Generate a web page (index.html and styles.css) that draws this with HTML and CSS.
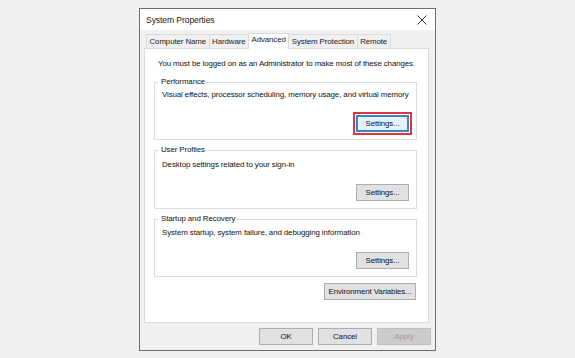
FILE: index.html
```html
<!DOCTYPE html>
<html>
<head>
  <meta charset="UTF-8">
  <title>System Properties</title>
  <link rel="stylesheet" href="styles.css">
</head>
<body>
  <div class="window">
    <div class="titlebar">
      <span class="title">System Properties</span>
      <svg class="close" width="10" height="10" viewBox="0 0 10 10">
        <path d="M0.5 0.5 L9.5 9.5 M9.5 0.5 L0.5 9.5" stroke="#333" stroke-width="1" fill="none"/>
      </svg>
    </div>

    <div class="tabs">
      <div class="tab">Computer Name</div>
      <div class="tab">Hardware</div>
      <div class="tab active">Advanced</div>
      <div class="tab">System Protection</div>
      <div class="tab">Remote</div>
    </div>

    <div class="panel">
      <p class="note">You must be logged on as an Administrator to make most of these changes.</p>

      <fieldset class="group group-perf">
        <legend>Performance</legend>
        <p class="desc">Visual effects, processor scheduling, memory usage, and virtual memory</p>
        <div class="actions">
          <span class="focus-ring"><button class="btn btn-default">Settings...</button></span>
        </div>
      </fieldset>

      <fieldset class="group group-user">
        <legend>User Profiles</legend>
        <p class="desc">Desktop settings related to your sign-in</p>
        <div class="actions">
          <button class="btn">Settings...</button>
        </div>
      </fieldset>

      <fieldset class="group">
        <legend>Startup and Recovery</legend>
        <p class="desc">System startup, system failure, and debugging information</p>
        <div class="actions">
          <button class="btn">Settings...</button>
        </div>
      </fieldset>

      <div class="env-row">
        <button class="btn btn-env">Environment Variables...</button>
      </div>
    </div>

    <div class="footer">
      <button class="btn btn-footer">OK</button>
      <button class="btn btn-footer">Cancel</button>
      <button class="btn btn-footer" disabled>Apply</button>
    </div>
  </div>
</body>
</html>
```

FILE: styles.css
```css
body {
  margin: 0;
  background-color: #f0f0f0;
  font-family: "Liberation Sans", Arial, sans-serif;
  font-size: 7.9px;
  letter-spacing: -0.1px;
  line-height: 10px;
  color: #111;
  display: flex;
  justify-content: center;
  padding-top: 8px;
}
.window {
  width: 295px;
  height: 341px;
  border: 1px solid #6e6e6e;
  background: #f0f0f0;
  display: flex;
  flex-direction: column;
}
.titlebar {
  height: 21px;
  background: #fff;
  display: flex;
  align-items: center;
  justify-content: space-between;
  padding: 0 8px 0 6px;
}
.title {
  font-size: 8.6px;
  color: #1a1a1a;
}
.tabs {
  display: flex;
  margin: 4px 0 0 6px;
  height: 14px;
  align-items: flex-end;
}
.tab {
  height: 13px;
  line-height: 13px;
  padding: 0 2.5px;
  border: 1px solid #dadada;
  border-bottom: none;
  margin-right: -1px;
  background: #f0f0f0;
  color: #1a1a1a;
  white-space: nowrap;
}
.tab.active {
  background: #fff;
  height: 15px;
  line-height: 12px;
  margin-bottom: -1px;
  position: relative;
  z-index: 1;
}
.panel {
  margin: 0 6px 0 4px;
  height: 273px;
  background: #fff;
  border: 1px solid #dadada;
  padding: 0 11px 0 9px;
}
.note {
  margin: 10px 0 8px 4px;
  white-space: nowrap;
}
.group {
  border: 1px solid #dcdcdc;
  margin: 0 0 5px 0;
  padding: 0 7px 7px 7px;
}
.group legend {
  padding: 0 1px 0 3px;
  margin-left: -4px;
}
.desc {
  margin: 4px 0 0 0;
  white-space: nowrap;
}
.actions {
  display: flex;
  justify-content: flex-end;
  margin-top: 14px;
}
.group-perf .desc {
  margin-top: 3px;
}
.group-perf .actions {
  margin-top: 15px;
}
.group-user .desc {
  margin-top: 5px;
}
.btn {
  font-family: inherit;
  font-size: 7.9px;
  letter-spacing: -0.1px;
  color: #111;
  background: #e1e1e1;
  border: 1px solid #adadad;
  height: 17px;
  padding: 0;
  width: 53px;
}
.focus-ring {
  display: flex;
  border: 2px solid #e2323c;
  padding: 1px;
  margin: -3px -3px -3px 0;
  background: #fff;
}
.btn-default {
  border: 1px solid #3c86c8;
  box-shadow: inset 0 0 0 1px #3c86c8;
  background: #e5f1fb;
}
.env-row {
  display: flex;
  justify-content: flex-end;
  margin-top: 6px;
  padding-right: 1px;
}
.btn-env {
  width: 92px;
}
.footer {
  display: flex;
  justify-content: flex-end;
  gap: 5px;
  margin: 5px 4px 0 0;
}
.btn-footer {
  width: 54px;
}
.btn-footer:disabled {
  background: #cccccc;
  border-color: #bfbfbf;
  color: #9a9a9a;
}
```
